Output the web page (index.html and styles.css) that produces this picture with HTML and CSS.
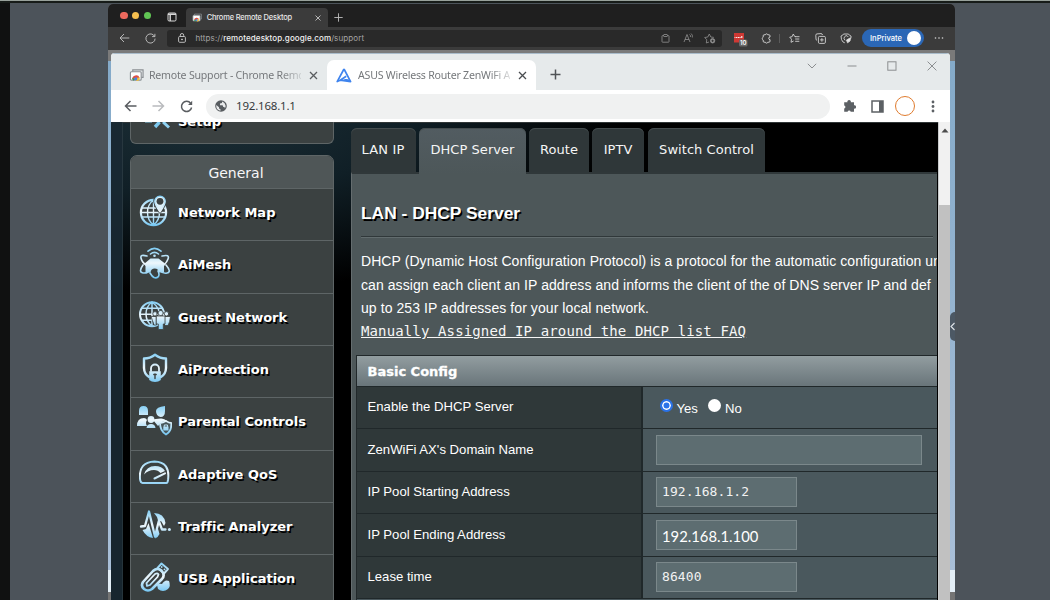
FILE: index.html
```html
<!DOCTYPE html>
<html lang="en">
<head>
<meta charset="utf-8">
<title>ASUS Wireless Router ZenWiFi AX - DHCP Server</title>
<link rel="stylesheet" href="styles.css">
</head>
<body>
<svg class="defs" width="0" height="0">
  <defs>
    <linearGradient id="ice" gradientUnits="userSpaceOnUse" x1="0" y1="0" x2="0" y2="32">
      <stop offset="0" stop-color="#78caf4"/><stop offset=".5" stop-color="#eef7fc"/><stop offset="1" stop-color="#69c2f2"/>
    </linearGradient>
    <g id="remote">
      <path d="M4 3.5V1.5H15V9.5H13" fill="none" stroke="#8a8f93" stroke-width="1.2"/>
      <rect x="1.5" y="3.5" width="11.5" height="9" rx="1" fill="#fff" stroke="#8a8f93" stroke-width="1.2"/>
      <path d="M3.4 11.5A4.2 4.2 0 0 1 11.4 9.8L7.5 10.5Z" fill="#dd5144"/>
      <path d="M3.3 10.5A4.2 4.2 0 0 0 5 13.2L7 11Z" fill="#2c9c56"/>
      <path d="M8 9.8H11.5A4.2 4.2 0 0 1 10 13.2L7.5 13.2Z" fill="#f5c034"/>
      <circle cx="7.3" cy="11" r="1.6" fill="#4a80ea"/>
    </g>
  </defs>
</svg>
<div class="screen">
  <div class="bezel"></div>
  <div class="desktop">
    <div class="edge-tabs">
      <div class="lights"><i class="red"></i><i class="amber"></i><i class="green"></i></div>
      <svg class="tab-actions" width="10" height="10" viewBox="0 0 10 10" fill="none" stroke="#d8d8d8"><rect x="1" y="1" width="8" height="8" rx="1.2"/><path d="M1 2.2H9M3.2 3V9" stroke-width="1.4"/></svg>
      <div class="edge-tab">
        <svg width="10" height="9" viewBox="0 0 16 14"><use href="#remote"/></svg>
        <span class="edge-title">Chrome Remote Desktop</span>
        <svg class="push" width="6" height="6" viewBox="0 0 6 6" stroke="#d5d5d5" stroke-width=".8"><path d="M.5.5L5.5 5.5M5.5.5L.5 5.5"/></svg>
      </div>
      <svg class="edge-plus" width="9" height="9" viewBox="0 0 9 9" stroke="#bdbdbd" stroke-width=".9"><path d="M4.5 .3V8.7M.3 4.5H8.7"/></svg>
    </div>
    <div class="edge-bar">
      <svg class="edge-back" width="11" height="10" viewBox="0 0 11 10" fill="none" stroke="#c4c4c4" stroke-width=".9"><path d="M10.3 5H1M5 1L1 5L5 9"/></svg>
      <svg class="edge-reload" width="11" height="11" viewBox="0 0 11 11" fill="none" stroke="#c4c4c4" stroke-width=".9"><path d="M9.6 3.4A4.6 4.6 0 1 0 10.1 5.6M9.9 .8V3.6H7.1"/></svg>
      <div class="edge-address">
        <svg width="8" height="10" viewBox="0 0 8 10" fill="none" stroke="#c9c9c9" stroke-width=".9"><rect x=".6" y="3.5" width="6.8" height="5.8" rx="1.1"/><path d="M2.3 3.5V2.2A1.7 1.7 0 0 1 5.7 2.2V3.5"/><circle cx="4" cy="6.4" r=".5" fill="#c9c9c9"/></svg>
        <span class="edge-url">https://<b>remotedesktop.google.com</b>/support</span>
        <svg class="push" width="9" height="9" viewBox="0 0 9 9" fill="none" stroke="#929292" stroke-width=".8"><rect x="1" y="1.6" width="7" height="6.6" rx=".5"/><rect x="3" y=".6" width="3" height="1.8" fill="#292929"/></svg>
        <svg class="read-aloud" width="11" height="10" viewBox="0 0 11 10" fill="none" stroke="#929292" stroke-width=".8"><path d="M1 9L4 1.5L7 9M2 6.5H6M6.5 1.5Q7.8 2.2 7.5 4M8 .5Q10 1.8 9.3 4.5"/></svg>
        <svg class="fav-add" width="12" height="11" viewBox="0 0 12 11" fill="none" stroke="#929292" stroke-width=".8"><path d="M5 9L2.3 10L2.8 6.8L.7 4.5L3.8 4L5.3 1L6.8 4L9.8 4.4"/><circle cx="8.6" cy="7.8" r="2.2" fill="#929292"/><path d="M8.6 6.6V9M7.4 7.8H9.8" stroke="#292929"/></svg>
      </div>
      <svg class="ext-red" width="15" height="15" viewBox="0 0 15 15"><rect x="1" y="1" width="10" height="9.5" fill="#cf3934"/><path d="M2 6V5.2M3.7 6V5M5.4 6V5M7 6V5M8.8 6V4" stroke="#fff" stroke-width="1.1"/><rect x="6" y="7.5" width="8.5" height="7" rx="1.5" fill="#696969"/><text class="badge" x="10.2" y="13.1" text-anchor="middle">10</text></svg>
      <svg class="ext-puzzle" width="11" height="11" viewBox="0 0 11 11" fill="none" stroke="#d2d2d2" stroke-width=".95"><path d="M3 1.8H4.3A1.3 1.3 0 0 1 6.8 1.8H8Q9 1.8 9 2.8V4A1.3 1.3 0 0 0 9 6.6V8.2Q9 9.2 8 9.2H6.8A1.3 1.3 0 0 1 4.3 9.2H3Q2.2 9.2 2.2 8.2V7A1.5 1.5 0 0 1 2.2 4.2V2.8Q2.2 1.8 3 1.8Z"/></svg>
      <div class="edge-divider"></div>
      <svg class="fav-list" width="11" height="11" viewBox="0 0 11 11" fill="none" stroke="#d2d2d2" stroke-width=".9"><path d="M7 3.7L5.7 3.5L4.3 1L3.1 3.7L.7 4.2L2.5 6.2L2 9.3L4.6 8M6.2 3.7H10.5M6.2 6H10.3M6.2 8.3H10.3"/></svg>
      <svg class="collections" width="11" height="11" viewBox="0 0 11 11" fill="none" stroke="#d2d2d2" stroke-width=".9"><rect x="3.4" y="3.4" width="7" height="7" rx="1.2"/><path d="M6.9 5.1V8.7M5.1 6.9H8.7M2 7.5Q1 7 1 6L.8 2.2Q.8 1 2 .9L6 .6Q7.3 .6 7.5 2"/></svg>
      <svg class="health" width="12" height="11" viewBox="0 0 12 11" fill="none" stroke="#d2d2d2" stroke-width=".9"><path d="M4.8 9.8L3 9Q1 7 1 3Q2.6 2.8 3.5 1H8.5Q9.4 2.7 11 3Q11.2 4.5 10.8 5.5M4.6 3.5Q3.2 5.5 5 7.3"/><path d="M5 3.2A2.2 2.2 0 0 1 8.3 4"/><path d="M6.5 7L10.5 4.8L10 8L7.5 9.8Z" fill="#e6e6e6"/></svg>
      <div class="inprivate"><span>InPrivate</span><i></i></div>
      <svg class="edge-more" width="10" height="4" viewBox="0 0 10 4" fill="#d5d5d5"><circle cx="1.5" cy="2" r=".8"/><circle cx="5" cy="2" r=".8"/><circle cx="8.5" cy="2" r=".8"/></svg>
    </div>

    <div class="remote-window">
      <div class="chrome-tabs">
        <div class="chrome-tab idle">
          <svg width="15" height="14" viewBox="0 0 16 14"><use href="#remote"/></svg>
          <span class="tab-title">Remote Support - Chrome Remo</span>
          <svg class="tab-close" width="9" height="9" viewBox="0 0 9 9" stroke="#5a5d60" stroke-width="1.3"><path d="M1 1L8 8M8 1L1 8"/></svg>
        </div>
        <div class="chrome-tab current">
          <svg class="asus" width="16" height="15" viewBox="0 0 16 15" fill="none" stroke="#3f84ee" stroke-width="1.7" stroke-linejoin="round"><path d="M8 1L1.2 13.6L4.2 12.2L10.2 8.2M8 1L14.6 13.6L7.5 10.2M4.2 12.2L14.6 13.6"/></svg>
          <span class="tab-title">ASUS Wireless Router ZenWiFi AX</span>
          <svg class="tab-close" width="9" height="9" viewBox="0 0 9 9" stroke="#4a4d50" stroke-width="1.3"><path d="M1 1L8 8M8 1L1 8"/></svg>
        </div>
        <svg class="new-tab" width="11" height="11" viewBox="0 0 11 11" stroke="#4f5356" stroke-width="1.5"><path d="M5.5 .5V10.5M.5 5.5H10.5"/></svg>
        <div class="win-buttons">
          <svg width="10" height="10" viewBox="0 0 10 10"><path d="M.8 2.8L5 7L9.2 2.8"/></svg>
          <svg width="10" height="10" viewBox="0 0 10 10"><path d="M.5 5H9.5"/></svg>
          <svg width="10" height="10" viewBox="0 0 10 10"><rect x=".8" y=".8" width="8.2" height="8.4"/></svg>
          <svg width="10" height="10" viewBox="0 0 10 10"><path d="M.6 .6L9.4 9.4M9.4 .6L.6 9.4"/></svg>
        </div>
      </div>
      <div class="chrome-bar">
        <svg class="nav" width="13" height="12" viewBox="0 0 13 12" stroke="#5a5d61"><path d="M12.5 6H1.5M6.5 1L1.5 6L6.5 11"/></svg>
        <svg class="nav" width="13" height="12" viewBox="0 0 13 12" stroke="#b9bbbe"><path d="M.5 6H11.5M6.5 1L11.5 6L6.5 11"/></svg>
        <svg class="nav" width="13" height="13" viewBox="0 0 13 13" stroke="#5a5d61"><path d="M10.7 3.4A5.1 5.1 0 1 0 11.6 7.5"/><path d="M12.2 .8V5H8Z" fill="#5a5d61" stroke="none"/></svg>
        <div class="omnibox">
          <svg width="12" height="12" viewBox="0 0 12 12"><circle cx="6" cy="6" r="5.8" fill="#585c60"/><path d="M1.3 5L4 7.2V8.5L5.5 9.2V10.8Q2 10.3 1.3 7ZM7 1.4V3L5 3.6V5.3H7.6L8.3 7H9.4L10 8.4Q11.5 5.8 9.6 3.2Q8.5 1.8 7 1.4Z" fill="#e9eaeb"/></svg>
          <span>192.168.1.1</span>
        </div>
        <svg class="puzzle" width="14" height="14" viewBox="0 0 14 14" fill="#5c6064"><path d="M1.2 3.3H4.4A1.8 1.8 0 1 1 7.8 3.3H11V6.3A1.7 1.7 0 1 1 11 9.6V12.8H7.7A1.6 1.6 0 0 0 4.6 12.8H1.2V9.6A1.6 1.6 0 0 0 1.2 6.5Z"/></svg>
        <svg class="side-panel" width="13" height="13" viewBox="0 0 13 13"><rect x="1" y="1" width="11" height="11" fill="#fff" stroke="#5c6064" stroke-width="1.5"/><rect x="8" y="1" width="4" height="11" fill="#5c6064"/></svg>
        <div class="profile"></div>
        <svg class="kebab" width="4" height="13" viewBox="0 0 4 13" fill="#5c6064"><circle cx="2" cy="2" r="1.4"/><circle cx="2" cy="6.5" r="1.4"/><circle cx="2" cy="11" r="1.4"/></svg>
      </div>

      <div class="viewport">
        <div class="page">
          <div class="edge-shade"></div>
          <nav class="sidebar">
            <div class="setup">
              <svg width="34" height="12" viewBox="0 0 34 12" fill="none"><path d="M5 0H12" stroke="#6f9db0" stroke-width="1.5"/><path d="M15 5L19.5 0" stroke="#7cc8ee" stroke-width="3.4"/><path d="M23 0L29 5.5" stroke="#8fd2f3" stroke-width="3"/></svg>
              <span class="menu-label">Setup</span>
            </div>
            <div class="menu">
              <div class="menu-title">General</div>
              <div class="item">
                <svg class="ico" viewBox="0 0 32 32"><circle cx="14.5" cy="17.5" r="12.6" stroke-width="2.2"/><path d="M14.5 6V30M3 13H26M3 22H26M3 17.5H26M14.5 5C6.5 11 6.5 24 14.5 30M14.5 5C22.5 11 22.5 24 14.5 30" stroke-width="1.4"/><path d="M21 17C17.5 12 15.8 9.2 15.8 6.3A5.2 5.2 0 0 1 26.2 6.3C26.2 9.2 24.5 12 21 17Z" fill="#dff1fa" stroke="#3b4141" stroke-width="3"/><path d="M21 17C17.5 12 15.8 9.2 15.8 6.3A5.2 5.2 0 0 1 26.2 6.3C26.2 9.2 24.5 12 21 17Z" fill="#dff1fa" stroke-width="1.4"/><circle cx="21" cy="6.3" r="3.4" fill="#3b4141" stroke="none"/></svg>
                <span class="menu-label">Network Map</span></div>
              <div class="item">
                <svg class="ico" viewBox="0 0 32 32"><path d="M9 4.2Q15.5-1.5 22 4.2M11.5 7Q15.5 3.8 19.5 7" stroke-width="1.6"/><circle cx="15.5" cy="8.7" r="1.3" class="solid"/><path d="M8 9Q1 7 2 11Q2.7 15 7 18M23 9Q31 7 29 12Q28 15 25 18M4 18Q-1 25 4 26Q7 26.3 9 25M27 18Q33 25 28 26Q24 27 20 23M11 26Q15 33 19 30Q21 28 19 24" stroke-width="1.6"/><path d="M11.5 11.5H19.5L26 16.5L25 18.5V25.5H19.8Q19.5 21.5 15.7 21.5Q12 21.5 11.5 25.5H6.5V18.5L5 17Z" class="solid"/></svg>
                <span class="menu-label">AiMesh</span></div>
              <div class="item">
                <svg class="ico" viewBox="0 0 32 32"><circle cx="13" cy="14.2" r="12" stroke-width="2"/><path d="M13 3V26M1.5 14.2H25M3 8.2H23M3 20.2H17M13 2C5 8 5 20 13 26M13 2C21 8 21 14 20 17" stroke-width="1.5"/><g stroke="#3b4141" stroke-width=".8" fill="url(#ice)"><path d="M12.5 16.5H17.5V25H15.2ZM26 16.5H31.5Q31 22 29 25.5H26Z"/><path d="M17.5 16H26V24H24.3V29.5H19.3V24H17.5Z"/><circle cx="16" cy="13.8" r="2.2"/><circle cx="21.7" cy="13" r="2.6"/><circle cx="27.5" cy="13.8" r="2.2"/></g></svg>
                <span class="menu-label">Guest Network</span></div>
              <div class="item">
                <svg class="ico" viewBox="0 0 32 32"><path d="M10 25Q5.2 22 5 16V6.5Q11 6.5 16 2.7Q21 6.5 27 6.5V16Q26.8 22 22 25" stroke-width="2.4"/><path d="M12 19V16.5A4 4 0 0 1 20 16.5V19" stroke-width="1.8"/><path d="M10.2 19.2H21.8V28Q19.5 30 16 30Q12.5 30 10.2 28Z" class="solid"/><path d="M16 22V26.5M14.8 22.5H17.2" stroke="#3b4141" stroke-width="1.4"/></svg>
                <span class="menu-label">AiProtection</span></div>
              <div class="item">
                <svg class="ico wide" viewBox="0 0 36 32"><path d="M3 11V7Q3 2 7.5 2Q12 2 12 7V11ZM20 7Q20 3 29 2V7Q29 13 24.5 13Q20 12 20 7Z" class="solid"/><path d="M1 22Q1 14 8 14Q10 14 11 16Q9 19 11 22ZM17 16Q19 14.5 24.5 14.5Q28 14 31 17L26 18L22 22Z" class="solid"/><circle cx="15" cy="15.5" r="3.4" class="solid"/><path d="M10.5 24Q11 20 15 20Q19 20 19.5 24Z" class="solid"/><path d="M24 19Q27 19 30 17Q33 19 35.2 19Q36 27 30 30.5Q24 27 24 19Z" fill="#48575c" stroke-width="1.8"/><rect x="27.3" y="22.5" width="5.2" height="4" class="solid"/><path d="M28.3 22.5V21H31.5V22.5" stroke-width="1"/></svg>
                <span class="menu-label">Parental Controls</span></div>
              <div class="item">
                <svg class="ico" viewBox="0 0 32 32"><path d="M3.5 26H27.5Q28.5 26 29 23Q31.5 5 15.5 4.5Q-.5 5 1 22Q1.5 26 3.5 26Z" stroke-width="2"/><path d="M5 17.5Q7.5 9 16 9Q23 9 26 14L21.5 16Q19 13 15 13Q9 13 5 17.5Z" class="solid"/><path d="M15.5 21.5L26 16.3" stroke-width="2"/></svg>
                <span class="menu-label">Adaptive QoS</span></div>
              <div class="item">
                <svg class="ico" viewBox="0 0 32 32"><path d="M3.5 21L7 20L9.5 14L14 29Q7 28 3.5 21ZM16 29.5L18.5 18L20.5 25Q19 28.5 16 29.5ZM15 4Q25 4 26.5 14L25 17L22 12L19.5 13L18 8Z" class="solid"/><path d="M2 17.5L6 17L10 2.5L16 27.5L19.8 12L23 20.5H26.5" stroke-width="2.3"/><circle cx="30.4" cy="20.5" r="1.5" class="solid"/></svg>
                <span class="menu-label">Traffic Analyzer</span></div>
              <div class="item">
                <svg class="ico" viewBox="0 0 32 32"><path d="M4 21L14 10Q18 6 22.5 9.5Q26.5 14 23 18L13 28Q9 31 5 28Q1.5 25 4 21Z" stroke-width="2.6"/><path d="M8 25L7.5 22L16 13Q18.5 11.5 19.5 13.5L18.5 16L11 24Z" stroke-width="1.8"/><path d="M18.5 7L22.5 2.5L29 8L25 12.5Z" stroke-width="1.9"/><circle cx="22.7" cy="6" r=".9" class="solid"/><circle cx="25.5" cy="8.4" r=".9" class="solid"/><path d="M18 24Q20 22 23 23Q26 18 30 20Q32 25 29 28Q24 32 19 28Z" class="solid" /></svg>
                <span class="menu-label">USB Application</span></div>
            </div>
          </nav>

          <main class="main">
            <div class="tabs">
              <div class="tab lan">LAN IP</div>
              <div class="tab dhcp active">DHCP Server</div>
              <div class="tab route">Route</div>
              <div class="tab iptv">IPTV</div>
              <div class="tab switch">Switch Control</div>
            </div>
            <div class="panel">
              <h1>LAN - DHCP Server</h1>
              <div class="rule"></div>
              <p class="line one">DHCP (Dynamic Host Configuration Protocol) is a protocol for the automatic configuration un</p>
              <p class="line two">can assign each client an IP address and informs the client of the of DNS server IP and def</p>
              <p class="line three">up to 253 IP addresses for your local network.</p>
              <a class="faq">Manually Assigned IP around the DHCP list FAQ</a>
              <div class="config">
                <div class="config-head">Basic Config</div>
                <div class="row"><div class="key">Enable the DHCP Server</div><div class="val"><i class="radio on"></i><span class="opt">Yes</span><i class="radio"></i><span class="opt">No</span></div></div>
                <div class="row"><div class="key">ZenWiFi AX's Domain Name</div><div class="val"><div class="field long"></div></div></div>
                <div class="row"><div class="key">IP Pool Starting Address</div><div class="val"><div class="field">192.168.1.2</div></div></div>
                <div class="row"><div class="key">IP Pool Ending Address</div><div class="val"><div class="field edited">192.168.1.100</div></div></div>
                <div class="row"><div class="key">Lease time</div><div class="val"><div class="field">86400</div></div></div>
                <div class="row"></div>
              </div>
            </div>
          </main>
        </div>
        <div class="scrollbar"><svg width="8" height="5" viewBox="0 0 8 5"><path d="M4 .5L7.5 4.5H.5Z" fill="#4c4c4c"/></svg><div class="thumb"></div></div>
      </div>
    </div>
    <div class="handle"><svg width="5" height="9" viewBox="0 0 5 9" fill="none" stroke="#e0e4e8" stroke-width="1.1"><path d="M4.5 1L1 4.5L4.5 8"/></svg></div>
  </div>
</div>
</body>
</html>
```
FILE: styles.css
```css
* { box-sizing: border-box; }
body { margin: 0; background: #4c535a; font-family: "Liberation Sans", Arial, sans-serif; }
svg { display: block; flex: none; }
.defs { height: 0; }
.push { margin-left: auto; }

.screen { display: flex; width: 1050px; height: 600px; overflow: hidden; border-top: 1px solid #98a19b; box-shadow: inset 0 2px #171c19; background: #4c535a; }
.bezel { width: 10px; background: #101111; margin-right: 98px; margin-top: 2px; }
.desktop {
  position: relative; width: 847px; height: 597px; margin-top: 3px; overflow: hidden; border-radius: 5px 5px 0 0;
  background: linear-gradient(#7a7a7a 57px, #84aac9 57px, #a9bfd8 566px, #e4eff7 566px, #e4eff7 588px, #747474 588px);
}

/* outer browser */
.edge-tabs { display: flex; height: 23px; padding-left: 12px; background: #1f1f1f; }
.lights { display: flex; gap: 4px; padding-top: 7.5px; }
.lights i { width: 7.6px; height: 7.6px; margin-right: .3px; border-radius: 50%; }
.red { background: #ed6a5e; }
.amber { background: #f5bf4f; }
.green { background: #61c554; }
.tab-actions { margin: 8px 0 0 15px; }
.edge-tab { display: flex; align-items: center; width: 142px; height: 19px; margin: 4px 0 0 9px; padding: 0 7px 0 6px; background: #3b3b3b; border-radius: 4px 4px 0 0; }
.edge-title { margin-left: 5px; color: #e6e6e6; font: 500 7.5px/10px Inter, sans-serif; letter-spacing: -.19px; white-space: nowrap; }
.edge-plus { margin: 9px 0 0 6px; }
.edge-bar { display: flex; align-items: center; height: 23px; padding: 0 0 1px 11px; background: #3b3b3b; }
.edge-reload { margin-left: 15px; }
.edge-address { display: flex; align-items: center; width: 555px; height: 17px; margin-left: 11px; padding: 0 6px 0 11px; background: #292929; border-radius: 3px; }
.edge-url { margin-left: 9.5px; color: #a3a3a3; font: 400 8px/12px Inter, sans-serif; letter-spacing: .1px; white-space: nowrap; }
.edge-url b { font-weight: 500; color: #f0f0f0; }
.read-aloud { margin-left: 13px; }
.fav-add { margin-left: 10px; }
.ext-red { margin: 2px 0 0 11px; }
.badge { font: 600 6px Inter, sans-serif; fill: #fff; }
.ext-puzzle { margin-left: 13px; }
.edge-divider { width: 1px; height: 9px; margin-left: 7px; background: #5b5b5b; }
.fav-list { margin-left: 9px; }
.collections { margin-left: 15px; }
.health { margin-left: 14px; }
.inprivate { display: flex; align-items: center; justify-content: space-between; width: 62px; height: 18px; margin-left: 10px; padding: 0 3px 0 8px; border-radius: 9px; background: #2b67b6; color: #fff; font: 500 7.6px/10px Inter, sans-serif; }
.inprivate span { padding-top: 1px; }
.inprivate i { width: 14px; height: 14px; border-radius: 50%; background: #fff; }
.edge-more { margin-left: 10px; }

/* remote browser */
.remote-window { width: 839px; height: 547px; margin: 3px 0 0 3px; overflow: hidden; border-radius: 4px 4px 0 0; background: #fff; }
.chrome-tabs { display: flex; height: 37px; padding: 0; background: #e6eaeb; border-top: 1px solid #a9bccb; }
.chrome-tab { display: flex; align-items: center; height: 30px; margin-top: 6px; }
.idle { width: 216px; padding-left: 18px; }
.current { width: 209px; padding-left: 9px; background: #fff; border-radius: 7px 7px 0 0; }
.tab-title { width: 152px; margin-left: 6px; color: #76797c; font: 400 10.6px/16px "Noto Sans", "Open Sans", sans-serif; letter-spacing: -.22px; white-space: nowrap; -webkit-mask-image: linear-gradient(90deg, #000 132px, transparent 158px); mask-image: linear-gradient(90deg, #000 132px, transparent 158px); }
.idle .tab-title { margin-left: 5px; }
.tab-close { margin-left: 8px; }
.new-tab { margin: 15px 0 0 14px; }
.win-buttons { display: flex; gap: 30px; margin: 7px 13px 0 auto; }
.win-buttons svg { fill: none; stroke: #8b8e90; stroke-width: 1; }
.chrome-bar { display: flex; align-items: center; height: 32px; padding-left: 13px; background: #fff; }
.nav { margin-right: 15px; fill: none; stroke-width: 1.5; }
.omnibox { display: flex; align-items: center; width: 624px; height: 25px; margin-left: -2px; padding-left: 9px; border-radius: 13px; background: #f0f1f1; color: #36393c; font: 400 11.5px/16px "Noto Sans", "Open Sans", sans-serif; letter-spacing: -.2px; }
.omnibox span { margin-left: 9px; }
.puzzle { margin-left: 13px; }
.side-panel { margin-left: 14px; }
.profile { width: 20px; height: 20px; margin-left: 11px; border: 1.5px solid #df7b2e; border-radius: 50%; }
.kebab { margin-left: 16px; }

/* router page */
.viewport { display: flex; height: 478px; }
.page { display: flex; width: 827px; background: radial-gradient(ellipse 430px 190px at 90px -20px, #1d3038, #101f26 50%, #000 100%) #000; box-shadow: inset 0 1px #303637; }
.edge-shade { width: 12px; border-right: 1px solid #2b3a42; background: #1a2a34; opacity: .9; }
.sidebar { width: 204px; margin-left: 7px; }
.setup { display: flex; height: 22px; border: 1px solid #5e6566; border-top: 0; border-radius: 0 0 6px 6px; background: #3b4141; }
.setup svg { margin-left: 9px; }
.setup .menu-label { margin: -8px 0 0 4px; clip-path: inset(8px -3px -3px 0); }
.menu-label { color: #fff; font: 700 13px/16px "DejaVu Sans", Verdana, sans-serif; font-variant-ligatures: none; text-shadow: 1.5px 1.5px 0 #000; white-space: nowrap; }
.menu { height: 470px; margin-top: 11px; border: 1px solid #5e6566; border-radius: 7px 7px 0 0; background: #3b4141; overflow: hidden; }
.menu-title { height: 32px; padding-left: 8px; background: #4f5657; color: #f7f7f7; font: 400 14px/34px "DejaVu Sans", Verdana, sans-serif; text-align: center; }
.item { display: flex; height: 52.33px; padding: 6px 0 0 8px; border-top: 1px solid #5e6566; }
.item .menu-label { margin: 10px 0 0 7px; }
.ico { width: 32px; height: 32px; fill: none; stroke: url(#ice); stroke-linecap: round; stroke-linejoin: round; }
.ico.wide { width: 36px; margin: 0 -1px 0 -3px; }
.solid { fill: url(#ice); stroke: none; }

.main { width: 587px; margin-left: 16px; padding: 6px 0 0 1px; overflow: hidden; }
.tabs { display: flex; height: 44px; color: #f5f5f5; font: 400 13px/43px "DejaVu Sans", Verdana, sans-serif; letter-spacing: .05px; text-align: center; white-space: nowrap; }
.tab { border-radius: 6px 6px 0 0; background: #2f3739; box-shadow: inset 0 1px #454d4f; }
.tab.active { position: relative; z-index: 1; height: 46px; background: linear-gradient(#525c61, #4d5759); }
.lan { width: 65px; margin-right: 3px; padding-right: 1px; letter-spacing: .15px; }
.dhcp { width: 107px; margin-right: 3px; }
.route { width: 60px; margin-right: 3px; }
.iptv { width: 52px; margin-right: 4px; }
.switch { width: 117px; }
.panel { height: 430px; border-top: 2px solid #30383a; border-left: 1px solid #656d6f; background: #4d5759; }
h1 { margin: 0; padding: 28px 0 0 9px; color: #fff; font: 700 17.4px/22px "Liberation Sans", Arial, sans-serif; text-shadow: 1.5px 1.5px 0 #000; white-space: nowrap; }
.rule { height: 2px; margin: 12px 4px 0 9px; border-top: 1px solid #30383a; border-bottom: 1px solid #626c6e; }
.line { margin: 0 0 0 9px; color: #fff; font: 400 14px/23.6px "Liberation Sans", Arial, sans-serif; letter-spacing: .075px; white-space: nowrap; }
.one { margin-top: 12px; }
.three { height: 22.8px; }
.faq { display: block; width: max-content; margin: 0 0 0 9px; color: #f6f6f6; font: 400 14px/22px "DejaVu Sans Mono", monospace; letter-spacing: .13px; text-decoration: underline; white-space: nowrap; }
.config { margin: 13px 0 0 4px; border-left: 1px solid #21282a; border-top: 1px solid #21282a; }
.config-head { height: 30px; padding-left: 10.5px; background: linear-gradient(#929da0, #69757a); color: #fff; font: 700 13px/31px "DejaVu Sans", Verdana, sans-serif; -webkit-text-stroke: .3px #fff; }
.row { display: flex; height: 42.5px; border-top: 1.5px solid #20282a; background: #4a585d; color: #fff; font-size: 13.15px; }
.key { display: flex; align-items: center; width: 286px; padding: 0 0 2px 10.5px; border-right: 2px solid #20282a; background: #2f3839; white-space: nowrap; }
.val { display: flex; align-items: center; padding: 0 0 1px 12.5px; }
.field { width: 141.5px; height: 30px; padding-left: 5.5px; border: 1.5px solid #7b888b; background: #5d6d71; color: #f2f2f2; font: 400 13px/27px "DejaVu Sans Mono", monospace; letter-spacing: .1px; white-space: nowrap; }
.field.long { width: 266.5px; }
.field.edited { color: #fff; font: 400 14.8px/30px Lato, sans-serif; letter-spacing: 0; }
.radio { width: 13px; height: 13px; margin: -3px 0 0 4px; border-radius: 50%; background: #fff; }
.radio + .opt + .radio { margin-left: 5px; }
.radio.on { border: 2px solid #2a72e8; box-shadow: inset 0 0 0 1.5px #fff; background: #2a72e8; }
.opt { margin: 2px 5px 0 4px; }

.scrollbar { display: flex; flex-direction: column; align-items: center; width: 12px; padding-top: 6px; background: #f1f1f1; border-left: 1px solid #c9cbcc; }
.thumb { flex: 1; width: 11px; margin-top: 72px; background: #c1c1c1; }
.handle { position: absolute; right: 0; top: 308px; display: flex; align-items: center; justify-content: flex-end; width: 5px; height: 29px; border-radius: 5px 0 0 5px; background: #4c5864; }
```
